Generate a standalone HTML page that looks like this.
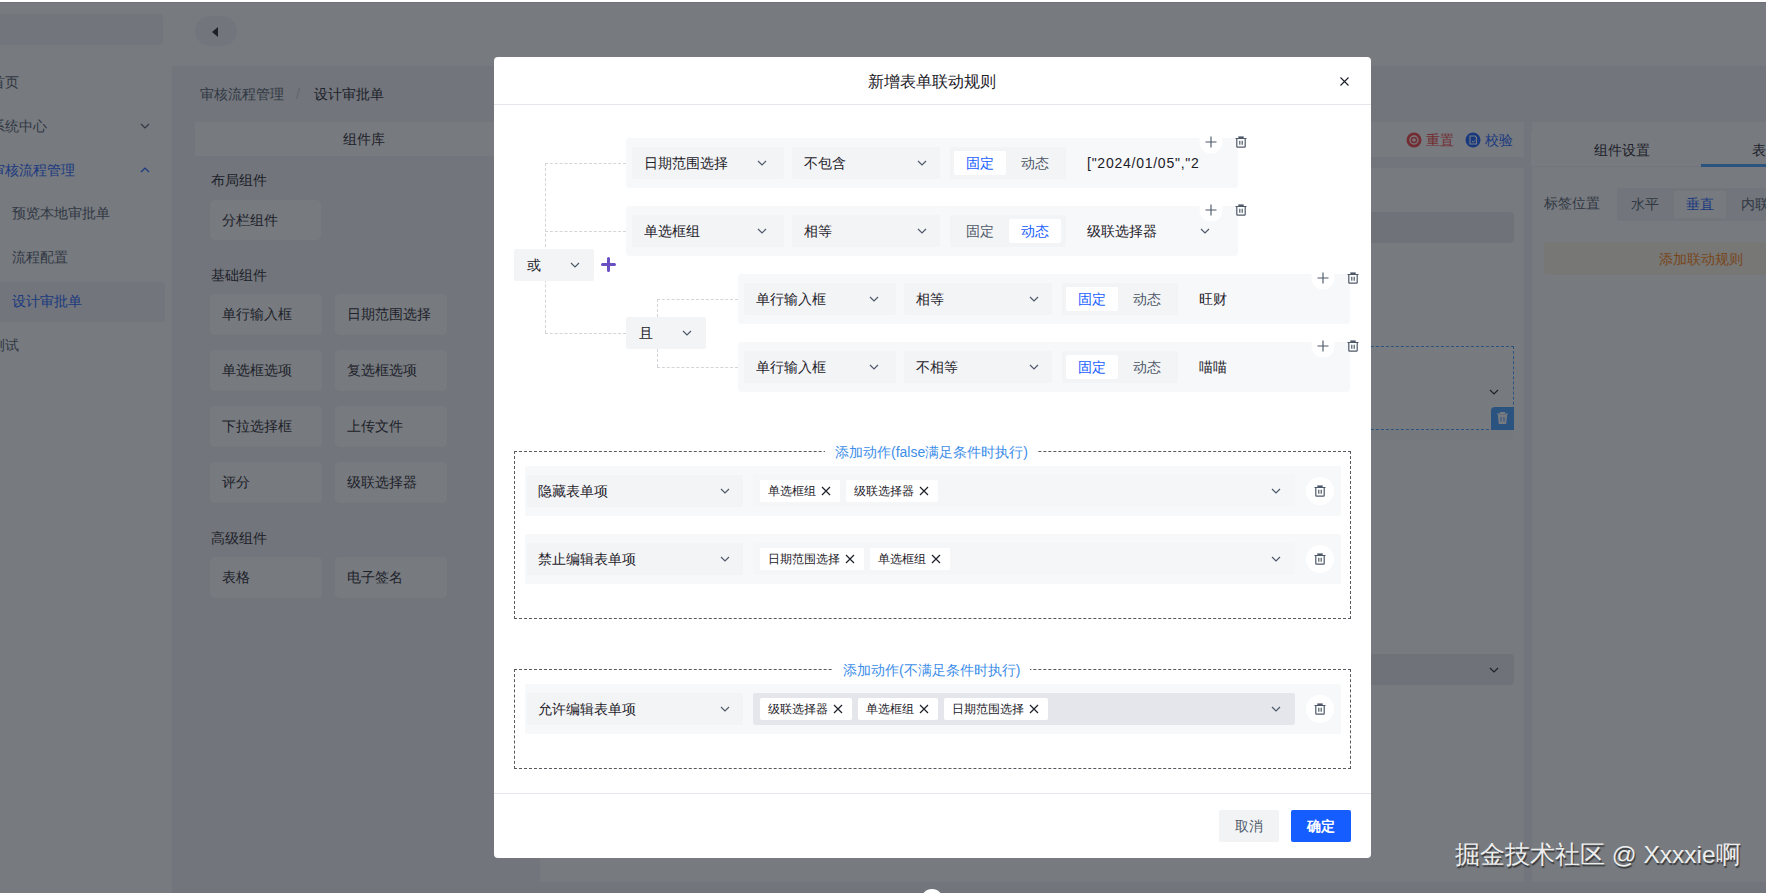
<!DOCTYPE html>
<html><head><meta charset="utf-8">
<style>
*{box-sizing:border-box;margin:0;padding:0}
html,body{width:1766px;height:893px;overflow:hidden;background:#fff}
body{position:relative;font-family:"Liberation Sans",sans-serif;font-size:14px;color:#1d2129}
.a{position:absolute}
.t{position:absolute;white-space:nowrap;line-height:22px;height:22px}
.t12{position:absolute;white-space:nowrap;line-height:20px;height:20px;font-size:12px}
.cb{width:112px;height:41px;background:#fff;border-radius:5px}
.chev{position:absolute;width:10px;height:6px}
/* app */
#app{position:absolute;left:0;top:0;width:1766px;height:893px;background:#f2f3f5}
#mask{position:absolute;left:0;top:0;width:1766px;height:893px;background:rgba(29,33,41,.6)}
/* modal */
#modal{position:absolute;left:494px;top:57px;width:877px;height:801px;background:#fff;border-radius:4px;overflow:hidden}
.row{position:absolute;background:#f7f8fa;border-radius:4px;width:612px;height:50px}
.sel{position:absolute;background:#f3f4f6;border-radius:2px;height:32px}
.dl{position:absolute;border-color:#d3d5d9;border-style:dashed;border-width:0}
.dh{border-top-width:1px;height:0}
.dv{border-left-width:1px;width:0}
.vs{background:transparent}
.rg{position:absolute;background:#f3f4f6;border-radius:2px;height:32px;width:116px}
.rb{position:absolute;height:24px;width:52px;top:4px;border-radius:2px;line-height:24px;text-align:center;color:#4e5969}
.rb.on{background:#fff;color:#165dff}
.tag{position:absolute;height:22px;background:#fff;border-radius:2px;font-size:12px;line-height:22px;padding-left:8px;color:#1d2129;white-space:nowrap}
.fs{position:absolute;border:1px dashed #56595e}
.legend{position:absolute;background:#fff;color:#3d8ee9;line-height:22px;height:22px;white-space:nowrap;padding:0 10px}
.arow{position:absolute;left:11px;width:816px;height:48px;background:#f7f8fa;border-radius:2px}
</style></head>
<body>
<div id="app">
  <!-- header -->
  <div class="a" style="left:0;top:0;width:1766px;height:66px;background:#fff"></div>
  <div class="a" style="left:0;top:14px;width:163px;height:31px;background:#f2f3f5;border-radius:0 4px 4px 0"></div>
  <div class="a" style="left:195px;top:16px;width:42px;height:30px;background:#f2f3f5;border-radius:15px"></div>
  <svg class="a" style="left:210px;top:26px" width="10" height="12" viewBox="0 0 10 12"><path d="M8 1 L2 6 L8 11 Z" fill="#1d2129"/></svg>
  <!-- sidebar -->
  <div class="a" style="left:0;top:66px;width:172px;height:827px;background:#fff"></div>
  <div class="a" style="left:0;top:282px;width:165px;height:40px;background:#f2f3f5;border-radius:0 4px 4px 0"></div>
  <div class="t" style="left:-9px;top:71px;color:#4e5969">首页</div>
  <div class="t" style="left:-9px;top:115px;color:#4e5969">系统中心</div>
  <div class="t" style="left:-9px;top:159px;color:#165dff">审核流程管理</div>
  <div class="t" style="left:12px;top:202px;color:#4e5969">预览本地审批单</div>
  <div class="t" style="left:12px;top:246px;color:#4e5969">流程配置</div>
  <div class="t" style="left:12px;top:290px;color:#165dff">设计审批单</div>
  <div class="t" style="left:-9px;top:334px;color:#4e5969">测试</div>
  <svg class="chev" style="left:140px;top:123px" viewBox="0 0 10 6"><path d="M1 1 L5 5 L9 1" fill="none" stroke="#4e5969" stroke-width="1.2"/></svg>
  <svg class="chev" style="left:140px;top:167px" viewBox="0 0 10 6"><path d="M1 5 L5 1 L9 5" fill="none" stroke="#165dff" stroke-width="1.2"/></svg>

  <!-- breadcrumb -->
  <div class="t" style="left:200px;top:83px;color:#4e5969">审核流程管理</div>
  <div class="t" style="left:296px;top:83px;color:#c9cdd4">/</div>
  <div class="t" style="left:314px;top:83px">设计审批单</div>

  <!-- component library -->
  
  <div class="a" style="left:195px;top:122px;width:345px;height:35px;background:#fff;border-bottom:1px solid #f2f3f5"></div>
  <div class="t" style="left:343px;top:128px">组件库</div>
  <div class="t" style="left:211px;top:169px">布局组件</div>
  <div class="t" style="left:211px;top:264px">基础组件</div>
  <div class="t" style="left:211px;top:527px">高级组件</div>

  <!-- component buttons -->
  <div class="a" style="left:210px;top:200px;width:111px;height:40px;background:#fff;border-radius:5px"></div>
  <div class="t" style="left:222px;top:209px">分栏组件</div>
  <div class="a cb" style="left:210px;top:294px"></div><div class="a cb" style="left:335px;top:294px"></div>
  <div class="a cb" style="left:210px;top:350px"></div><div class="a cb" style="left:335px;top:350px"></div>
  <div class="a cb" style="left:210px;top:406px"></div><div class="a cb" style="left:335px;top:406px"></div>
  <div class="a cb" style="left:210px;top:462px"></div><div class="a cb" style="left:335px;top:462px"></div>
  <div class="a cb" style="left:210px;top:557px"></div><div class="a cb" style="left:335px;top:557px"></div>
  <div class="t" style="left:222px;top:303px">单行输入框</div><div class="t" style="left:347px;top:303px">日期范围选择</div>
  <div class="t" style="left:222px;top:359px">单选框选项</div><div class="t" style="left:347px;top:359px">复选框选项</div>
  <div class="t" style="left:222px;top:415px">下拉选择框</div><div class="t" style="left:347px;top:415px">上传文件</div>
  <div class="t" style="left:222px;top:471px">评分</div><div class="t" style="left:347px;top:471px">级联选择器</div>
  <div class="t" style="left:222px;top:566px">表格</div><div class="t" style="left:347px;top:566px">电子签名</div>

  <!-- canvas -->
  <div class="a" style="left:540px;top:122px;width:984px;height:760px;background:#fff"></div>
  <div class="a" style="left:540px;top:157px;width:984px;height:11px;background:#f2f3f5"></div>
  <svg class="a" style="left:1406px;top:132px" width="16" height="16" viewBox="0 0 16 16"><circle cx="8" cy="8" r="7.5" fill="#f53f3f"/><circle cx="8" cy="8" r="4" fill="none" stroke="#fff" stroke-width="1.3"/><circle cx="8" cy="8" r="1.8" fill="#fff"/></svg>
  <div class="t" style="left:1426px;top:129px;color:#f53f3f">重置</div>
  <svg class="a" style="left:1465px;top:132px" width="16" height="16" viewBox="0 0 16 16"><circle cx="8" cy="8" r="7.5" fill="#165dff"/><path d="M5 4h5l1.5 1.5V12H5z" fill="none" stroke="#fff" stroke-width="1.1"/><path d="M7 9l1.2 1.2L10.5 8" fill="none" stroke="#fff" stroke-width="1"/></svg>
  <div class="t" style="left:1485px;top:129px;color:#165dff">校验</div>
  <div class="a" style="left:560px;top:212px;width:954px;height:31px;background:#eceef1;border-radius:4px"></div>
  <div class="a" style="left:560px;top:430px;width:954px;height:10px;background:#fafafa"></div>
  <div class="a" style="left:560px;top:346px;width:954px;height:84px;border:1px dashed #409eff"></div>
  <svg class="chev" style="left:1489px;top:389px" viewBox="0 0 10 6"><path d="M1 1 L5 5 L9 1" fill="none" stroke="#1d2129" stroke-width="1.2"/></svg>
  <div class="a" style="left:1491px;top:407px;width:23px;height:23px;background:#409eff;border-radius:4px 0 0 0"></div>
  <svg class="a" style="left:1496px;top:411px" width="13" height="14" viewBox="0 0 13 14"><path d="M1 3h11M4.5 3V1.5h4V3M2.5 3.5l.8 9h6.4l.8-9" fill="#fff" stroke="#fff" stroke-width="1.2"/><path d="M5 6v4.5M8 6v4.5" stroke="#409eff" stroke-width="1"/></svg>
  <div class="a" style="left:560px;top:654px;width:954px;height:31px;background:#eceef1;border-radius:4px"></div>
  <svg class="chev" style="left:1489px;top:667px" viewBox="0 0 10 6"><path d="M1 1 L5 5 L9 1" fill="none" stroke="#1d2129" stroke-width="1.2"/></svg>

  <!-- right panel -->
  <div class="a" style="left:1532px;top:122px;width:234px;height:760px;background:#fff"></div>
  <div class="a" style="left:1531px;top:131px;width:235px;height:36px;background:#fff;border-bottom:1px solid #f2f3f5"></div>
  <div class="t" style="left:1594px;top:139px">组件设置</div>
  <div class="t" style="left:1752px;top:139px">表单设置</div>
  <div class="a" style="left:1701px;top:164px;width:65px;height:3px;background:#409eff"></div>
  <div class="t" style="left:1544px;top:192px;color:#4e5969">标签位置</div>
  <div class="a" style="left:1617px;top:188px;width:149px;height:33px;background:#f2f3f5;border-radius:2px"></div>
  <div class="a" style="left:1674px;top:191px;width:52px;height:27px;background:#fff;border-radius:2px"></div>
  <div class="t" style="left:1631px;top:193px;color:#4e5969">水平</div>
  <div class="t" style="left:1686px;top:193px;color:#165dff">垂直</div>
  <div class="t" style="left:1741px;top:193px;color:#4e5969">内联</div>
  <div class="a" style="left:1544px;top:242px;width:222px;height:33px;background:#fff7e8;border-radius:2px"></div>
  <div class="t" style="left:1659px;top:248px;color:#ff7d00">添加联动规则</div>
</div>
<div id="mask"></div>
<div id="modal"></div>
<div class="a" style="left:494px;top:104px;width:877px;height:1px;background:#e5e6eb"></div>
<div class="a" style="left:494px;top:793px;width:877px;height:1px;background:#e5e6eb"></div>
<div class="a" style="left:493px;top:71px;width:877px;text-align:center;font-size:16px;line-height:22px">新增表单联动规则</div>
<svg class="a" style="left:1340px;top:77px" width="9" height="9" viewBox="0 0 9 9"><path d="M.5 .5l8 8M8.5 .5l-8 8" stroke="#1d2129" stroke-width="1.1"/></svg>
<div class="a" style="left:1219px;top:810px;width:60px;height:32px;background:#f2f3f5;border-radius:2px;line-height:32px;text-align:center;color:#4e5969">取消</div>
<div class="a" style="left:1291px;top:810px;width:60px;height:32px;background:#165dff;border-radius:2px;line-height:32px;text-align:center;color:#fff;font-weight:bold">确定</div>
<div class="dl dv" style="left:545px;top:163px;height:170px"></div>
<div class="dl dh" style="left:545px;top:163px;width:81px"></div>
<div class="dl dh" style="left:545px;top:231px;width:81px"></div>
<div class="dl dh" style="left:545px;top:333px;width:81px"></div>
<div class="dl dv" style="left:657px;top:299px;height:68px"></div>
<div class="dl dh" style="left:657px;top:299px;width:81px"></div>
<div class="dl dh" style="left:657px;top:367px;width:81px"></div>
<div class="sel" style="left:514px;top:249px;width:80px"></div>
<div class="t" style="left:527px;top:254px">或</div>
<svg class="chev" style="left:570px;top:262px" viewBox="0 0 10 6"><path d="M1 1 L5 5 L9 1" fill="none" stroke="#4e5969" stroke-width="1.2"/></svg>
<svg class="a" style="left:601px;top:257px" width="15" height="15" viewBox="0 0 15 15"><path d="M1.5 7.5h12M7.5 1.5v12" stroke="#6a4fc3" stroke-width="3" stroke-linecap="round"/></svg>
<div class="sel" style="left:626px;top:317px;width:80px"></div>
<div class="t" style="left:639px;top:322px">且</div>
<svg class="chev" style="left:682px;top:330px" viewBox="0 0 10 6"><path d="M1 1 L5 5 L9 1" fill="none" stroke="#4e5969" stroke-width="1.2"/></svg>
<div class="row" style="left:626px;top:138px"></div>
<div class="sel" style="left:632px;top:147px;width:152px"></div>
<div class="t" style="left:644px;top:152px">日期范围选择</div>
<svg class="chev" style="left:757px;top:160px" viewBox="0 0 10 6"><path d="M1 1 L5 5 L9 1" fill="none" stroke="#4e5969" stroke-width="1.2"/></svg>
<div class="sel" style="left:792px;top:147px;width:148px"></div>
<div class="t" style="left:804px;top:152px">不包含</div>
<svg class="chev" style="left:917px;top:160px" viewBox="0 0 10 6"><path d="M1 1 L5 5 L9 1" fill="none" stroke="#4e5969" stroke-width="1.2"/></svg>
<div class="rg" style="left:950px;top:147px"><div class="rb on" style="left:4px">固定</div><div class="rb" style="left:59px">动态</div></div>
<div class="sel vs" style="left:1076px;top:147px;width:152px"></div>
<div class="t" style="left:1087px;top:152px;letter-spacing:0.75px">["2024/01/05","2</div>
<svg class="a" style="left:1199px;top:130px" width="24" height="24" viewBox="-5 -5 24 24"><circle cx="7" cy="7" r="11.5" fill="#fff"/><path d="M1.5 7h11M7 1.5v11" stroke="#4e5969" stroke-width="1.15"/></svg>
<svg class="a" style="left:1235px;top:136px" width="12" height="12" viewBox="0 0 12 12"><path d="M0.5 2.5h11M1.8 2.8v7.6q0 .8.8.8h6.8q.8 0 .8-.8V2.8M4.8 4.8v4M7.2 4.8v4" fill="none" stroke="#4e5969" stroke-width="1.2"/><rect x="3.3" y="0.4" width="5.4" height="1.8" fill="#4e5969"/></svg>
<div class="row" style="left:626px;top:206px"></div>
<div class="sel" style="left:632px;top:215px;width:152px"></div>
<div class="t" style="left:644px;top:220px">单选框组</div>
<svg class="chev" style="left:757px;top:228px" viewBox="0 0 10 6"><path d="M1 1 L5 5 L9 1" fill="none" stroke="#4e5969" stroke-width="1.2"/></svg>
<div class="sel" style="left:792px;top:215px;width:148px"></div>
<div class="t" style="left:804px;top:220px">相等</div>
<svg class="chev" style="left:917px;top:228px" viewBox="0 0 10 6"><path d="M1 1 L5 5 L9 1" fill="none" stroke="#4e5969" stroke-width="1.2"/></svg>
<div class="rg" style="left:950px;top:215px"><div class="rb" style="left:4px">固定</div><div class="rb on" style="left:59px">动态</div></div>
<div class="sel vs" style="left:1076px;top:215px;width:152px"></div>
<div class="t" style="left:1087px;top:220px">级联选择器</div>
<svg class="chev" style="left:1200px;top:228px" viewBox="0 0 10 6"><path d="M1 1 L5 5 L9 1" fill="none" stroke="#4e5969" stroke-width="1.2"/></svg>
<svg class="a" style="left:1199px;top:198px" width="24" height="24" viewBox="-5 -5 24 24"><circle cx="7" cy="7" r="11.5" fill="#fff"/><path d="M1.5 7h11M7 1.5v11" stroke="#4e5969" stroke-width="1.15"/></svg>
<svg class="a" style="left:1235px;top:204px" width="12" height="12" viewBox="0 0 12 12"><path d="M0.5 2.5h11M1.8 2.8v7.6q0 .8.8.8h6.8q.8 0 .8-.8V2.8M4.8 4.8v4M7.2 4.8v4" fill="none" stroke="#4e5969" stroke-width="1.2"/><rect x="3.3" y="0.4" width="5.4" height="1.8" fill="#4e5969"/></svg>
<div class="row" style="left:738px;top:274px"></div>
<div class="sel" style="left:744px;top:283px;width:152px"></div>
<div class="t" style="left:756px;top:288px">单行输入框</div>
<svg class="chev" style="left:869px;top:296px" viewBox="0 0 10 6"><path d="M1 1 L5 5 L9 1" fill="none" stroke="#4e5969" stroke-width="1.2"/></svg>
<div class="sel" style="left:904px;top:283px;width:148px"></div>
<div class="t" style="left:916px;top:288px">相等</div>
<svg class="chev" style="left:1029px;top:296px" viewBox="0 0 10 6"><path d="M1 1 L5 5 L9 1" fill="none" stroke="#4e5969" stroke-width="1.2"/></svg>
<div class="rg" style="left:1062px;top:283px"><div class="rb on" style="left:4px">固定</div><div class="rb" style="left:59px">动态</div></div>
<div class="sel vs" style="left:1188px;top:283px;width:152px"></div>
<div class="t" style="left:1199px;top:288px">旺财</div>
<svg class="a" style="left:1311px;top:266px" width="24" height="24" viewBox="-5 -5 24 24"><circle cx="7" cy="7" r="11.5" fill="#fff"/><path d="M1.5 7h11M7 1.5v11" stroke="#4e5969" stroke-width="1.15"/></svg>
<svg class="a" style="left:1347px;top:272px" width="12" height="12" viewBox="0 0 12 12"><path d="M0.5 2.5h11M1.8 2.8v7.6q0 .8.8.8h6.8q.8 0 .8-.8V2.8M4.8 4.8v4M7.2 4.8v4" fill="none" stroke="#4e5969" stroke-width="1.2"/><rect x="3.3" y="0.4" width="5.4" height="1.8" fill="#4e5969"/></svg>
<div class="row" style="left:738px;top:342px"></div>
<div class="sel" style="left:744px;top:351px;width:152px"></div>
<div class="t" style="left:756px;top:356px">单行输入框</div>
<svg class="chev" style="left:869px;top:364px" viewBox="0 0 10 6"><path d="M1 1 L5 5 L9 1" fill="none" stroke="#4e5969" stroke-width="1.2"/></svg>
<div class="sel" style="left:904px;top:351px;width:148px"></div>
<div class="t" style="left:916px;top:356px">不相等</div>
<svg class="chev" style="left:1029px;top:364px" viewBox="0 0 10 6"><path d="M1 1 L5 5 L9 1" fill="none" stroke="#4e5969" stroke-width="1.2"/></svg>
<div class="rg" style="left:1062px;top:351px"><div class="rb on" style="left:4px">固定</div><div class="rb" style="left:59px">动态</div></div>
<div class="sel vs" style="left:1188px;top:351px;width:152px"></div>
<div class="t" style="left:1199px;top:356px">喵喵</div>
<svg class="a" style="left:1311px;top:334px" width="24" height="24" viewBox="-5 -5 24 24"><circle cx="7" cy="7" r="11.5" fill="#fff"/><path d="M1.5 7h11M7 1.5v11" stroke="#4e5969" stroke-width="1.15"/></svg>
<svg class="a" style="left:1347px;top:340px" width="12" height="12" viewBox="0 0 12 12"><path d="M0.5 2.5h11M1.8 2.8v7.6q0 .8.8.8h6.8q.8 0 .8-.8V2.8M4.8 4.8v4M7.2 4.8v4" fill="none" stroke="#4e5969" stroke-width="1.2"/><rect x="3.3" y="0.4" width="5.4" height="1.8" fill="#4e5969"/></svg>
<div class="fs" style="left:514px;top:451px;width:837px;height:168px"></div>
<div class="legend" style="left:825px;top:441px">添加动作(false满足条件时执行)</div>
<div class="a" style="left:525px;top:466px;width:816px;height:50px;background:#f7f8fa;border-radius:2px"></div>
<div class="sel" style="left:527px;top:475px;width:216px"></div>
<div class="t" style="left:538px;top:480px">隐藏表单项</div>
<svg class="chev" style="left:720px;top:488px" viewBox="0 0 10 6"><path d="M1 1 L5 5 L9 1" fill="none" stroke="#4e5969" stroke-width="1.2"/></svg>
<div class="sel" style="left:753px;top:475px;width:542px;background:#f5f6f8"></div>
<div class="tag" style="left:760px;top:480px;width:80px">单选框组<svg class="a" style="right:9px;top:6px" width="10" height="10" viewBox="0 0 10 10"><path d="M1 1L9 9M9 1L1 9" stroke="#1d2129" stroke-width="1.2"/></svg></div>
<div class="tag" style="left:846px;top:480px;width:92px">级联选择器<svg class="a" style="right:9px;top:6px" width="10" height="10" viewBox="0 0 10 10"><path d="M1 1L9 9M9 1L1 9" stroke="#1d2129" stroke-width="1.2"/></svg></div>
<svg class="chev" style="left:1271px;top:488px" viewBox="0 0 10 6"><path d="M1 1 L5 5 L9 1" fill="none" stroke="#4e5969" stroke-width="1.2"/></svg>
<div class="a" style="left:1306px;top:477px;width:28px;height:28px;border-radius:14px;background:#fff"></div><svg class="a" style="left:1314px;top:485px" width="12" height="12" viewBox="0 0 12 12"><path d="M0.5 2.5h11M1.8 2.8v7.6q0 .8.8.8h6.8q.8 0 .8-.8V2.8M4.8 4.8v4M7.2 4.8v4" fill="none" stroke="#4e5969" stroke-width="1.2"/><rect x="3.3" y="0.4" width="5.4" height="1.8" fill="#4e5969"/></svg>
<div class="a" style="left:525px;top:534px;width:816px;height:50px;background:#f7f8fa;border-radius:2px"></div>
<div class="sel" style="left:527px;top:543px;width:216px"></div>
<div class="t" style="left:538px;top:548px">禁止编辑表单项</div>
<svg class="chev" style="left:720px;top:556px" viewBox="0 0 10 6"><path d="M1 1 L5 5 L9 1" fill="none" stroke="#4e5969" stroke-width="1.2"/></svg>
<div class="sel" style="left:753px;top:543px;width:542px;background:#f5f6f8"></div>
<div class="tag" style="left:760px;top:548px;width:104px">日期范围选择<svg class="a" style="right:9px;top:6px" width="10" height="10" viewBox="0 0 10 10"><path d="M1 1L9 9M9 1L1 9" stroke="#1d2129" stroke-width="1.2"/></svg></div>
<div class="tag" style="left:870px;top:548px;width:80px">单选框组<svg class="a" style="right:9px;top:6px" width="10" height="10" viewBox="0 0 10 10"><path d="M1 1L9 9M9 1L1 9" stroke="#1d2129" stroke-width="1.2"/></svg></div>
<svg class="chev" style="left:1271px;top:556px" viewBox="0 0 10 6"><path d="M1 1 L5 5 L9 1" fill="none" stroke="#4e5969" stroke-width="1.2"/></svg>
<div class="a" style="left:1306px;top:545px;width:28px;height:28px;border-radius:14px;background:#fff"></div><svg class="a" style="left:1314px;top:553px" width="12" height="12" viewBox="0 0 12 12"><path d="M0.5 2.5h11M1.8 2.8v7.6q0 .8.8.8h6.8q.8 0 .8-.8V2.8M4.8 4.8v4M7.2 4.8v4" fill="none" stroke="#4e5969" stroke-width="1.2"/><rect x="3.3" y="0.4" width="5.4" height="1.8" fill="#4e5969"/></svg>
<div class="fs" style="left:514px;top:669px;width:837px;height:100px"></div>
<div class="legend" style="left:833px;top:659px">添加动作(不满足条件时执行)</div>
<div class="a" style="left:525px;top:684px;width:816px;height:50px;background:#f7f8fa;border-radius:2px"></div>
<div class="sel" style="left:527px;top:693px;width:216px"></div>
<div class="t" style="left:538px;top:698px">允许编辑表单项</div>
<svg class="chev" style="left:720px;top:706px" viewBox="0 0 10 6"><path d="M1 1 L5 5 L9 1" fill="none" stroke="#4e5969" stroke-width="1.2"/></svg>
<div class="sel" style="left:753px;top:693px;width:542px;background:#e5e6eb"></div>
<div class="tag" style="left:760px;top:698px;width:92px">级联选择器<svg class="a" style="right:9px;top:6px" width="10" height="10" viewBox="0 0 10 10"><path d="M1 1L9 9M9 1L1 9" stroke="#1d2129" stroke-width="1.2"/></svg></div>
<div class="tag" style="left:858px;top:698px;width:80px">单选框组<svg class="a" style="right:9px;top:6px" width="10" height="10" viewBox="0 0 10 10"><path d="M1 1L9 9M9 1L1 9" stroke="#1d2129" stroke-width="1.2"/></svg></div>
<div class="tag" style="left:944px;top:698px;width:104px">日期范围选择<svg class="a" style="right:9px;top:6px" width="10" height="10" viewBox="0 0 10 10"><path d="M1 1L9 9M9 1L1 9" stroke="#1d2129" stroke-width="1.2"/></svg></div>
<svg class="chev" style="left:1271px;top:706px" viewBox="0 0 10 6"><path d="M1 1 L5 5 L9 1" fill="none" stroke="#4e5969" stroke-width="1.2"/></svg>
<div class="a" style="left:1306px;top:695px;width:28px;height:28px;border-radius:14px;background:#fff"></div><svg class="a" style="left:1314px;top:703px" width="12" height="12" viewBox="0 0 12 12"><path d="M0.5 2.5h11M1.8 2.8v7.6q0 .8.8.8h6.8q.8 0 .8-.8V2.8M4.8 4.8v4M7.2 4.8v4" fill="none" stroke="#4e5969" stroke-width="1.2"/><rect x="3.3" y="0.4" width="5.4" height="1.8" fill="#4e5969"/></svg>
<div class="a" style="left:1455px;top:837.5px;font-size:24.5px;line-height:34px;color:#eceded;white-space:nowrap;text-shadow:1px 1.5px 1px rgba(0,0,0,.55)">掘金技术社区 @ Xxxxie啊</div>
<div class="a" style="left:921px;top:889px;width:22px;height:22px;border-radius:11px;background:#fff"></div>
<div class="a" style="left:0;top:0;width:1766px;height:2px;background:#fff"></div>
<div class="a" style="left:0;top:2px;width:1766px;height:1px;background:rgba(0,0,0,.08)"></div>
</body></html>
